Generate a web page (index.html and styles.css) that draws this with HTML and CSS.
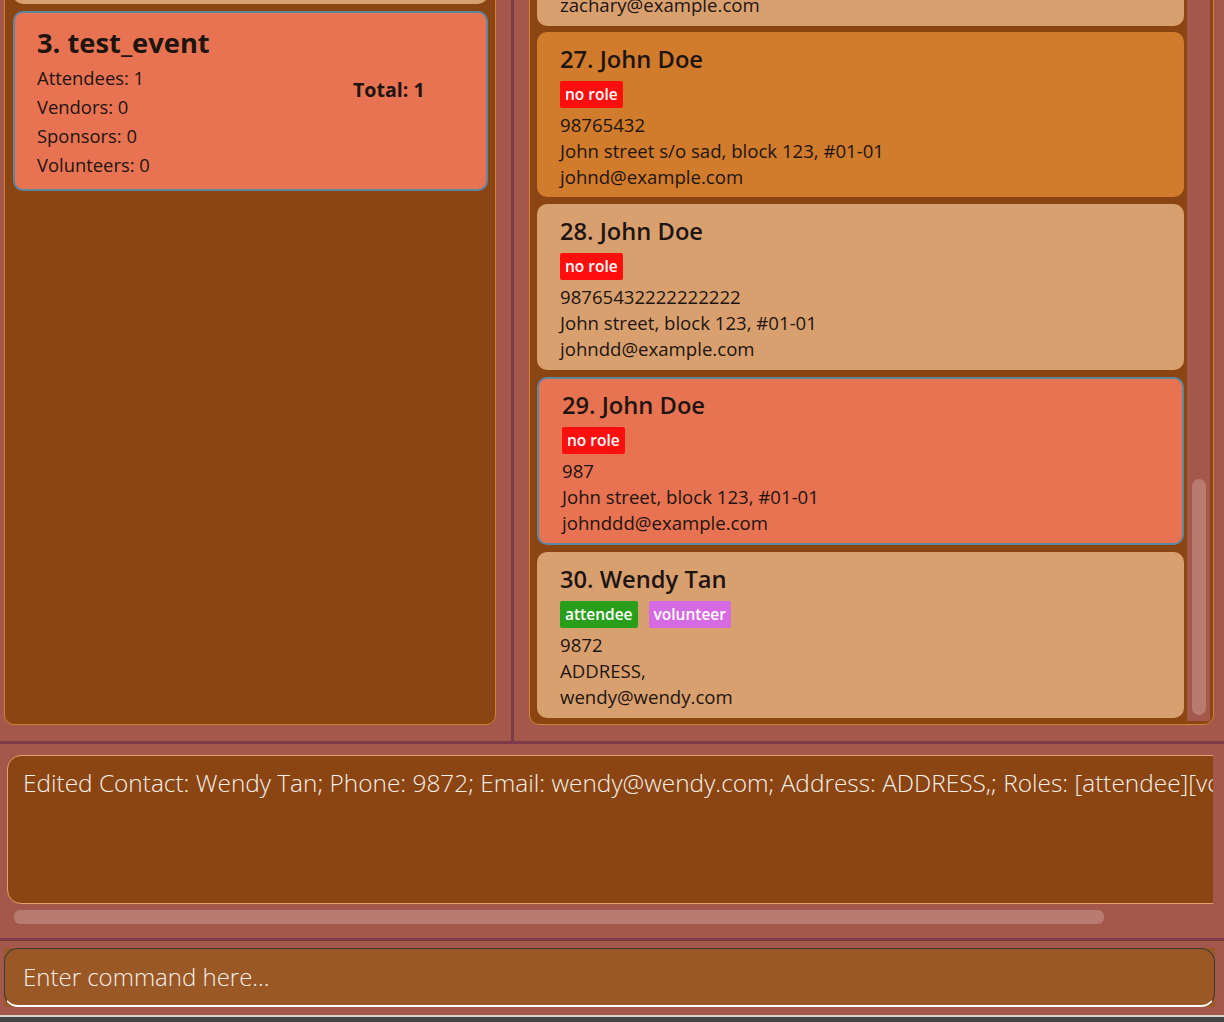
FILE: index.html
```html
<!DOCTYPE html>
<html lang="en">
<head>
<meta charset="utf-8">
<title>Contacts</title>
<link rel="stylesheet" href="styles.css">
</head>
<body>
<div class="app">
  <div class="lists">
    <div class="left-pane">
      <div class="panel event-panel">
        <div class="event-list">
          <div class="event-card partial"></div>
          <div class="event-card selected">
            <div class="event-title">3. test_event</div>
            <div class="event-counts">
              <div>Attendees: 1</div>
              <div>Vendors: 0</div>
              <div>Sponsors: 0</div>
              <div>Volunteers: 0</div>
            </div>
            <div class="event-total">Total: 1</div>
          </div>
        </div>
      </div>
    </div>
    <div class="divider"></div>
    <div class="right-pane">
      <div class="panel person-panel">
        <div class="person-list">
          <div class="person-card beige tail">
            <div class="line">zachary@example.com</div>
          </div>
          <div class="person-card orange first">
            <div class="name">27. John Doe</div>
            <div class="roles"><span class="role none">no role</span></div>
            <div class="line">98765432</div>
            <div class="line">John street s/o sad, block 123, #01-01</div>
            <div class="line">johnd@example.com</div>
          </div>
          <div class="person-card beige">
            <div class="name">28. John Doe</div>
            <div class="roles"><span class="role none">no role</span></div>
            <div class="line">98765432222222222</div>
            <div class="line">John street, block 123, #01-01</div>
            <div class="line">johndd@example.com</div>
          </div>
          <div class="person-card selected">
            <div class="name">29. John Doe</div>
            <div class="roles"><span class="role none">no role</span></div>
            <div class="line">987</div>
            <div class="line">John street, block 123, #01-01</div>
            <div class="line">johnddd@example.com</div>
          </div>
          <div class="person-card beige">
            <div class="name">30. Wendy Tan</div>
            <div class="roles"><span class="role attendee">attendee</span><span class="role volunteer">volunteer</span></div>
            <div class="line">9872</div>
            <div class="line">ADDRESS,</div>
            <div class="line">wendy@wendy.com</div>
          </div>
        </div>
        <div class="vscroll"><div class="vthumb"></div></div>
      </div>
    </div>
  </div>
  <div class="hline"></div>
  <div class="result-section">
    <div class="result-clip">
      <div class="result-box">Edited Contact: Wendy Tan; Phone: 9872; Email: wendy@wendy.com; Address: ADDRESS,; Roles: [attendee][volunteer]</div>
    </div>
    <div class="hscroll"><div class="hthumb"></div></div>
  </div>
  <div class="hline"></div>
  <div class="command-section">
    <div class="command-field">
      <div class="command-input">Enter command here...</div>
    </div>
  </div>
  <div class="window-bottom"></div>
</div>
</body>
</html>
```

FILE: styles.css
```css
* { box-sizing: border-box; }

html, body {
  margin: 0;
  padding: 0;
  width: 1224px;
  height: 1022px;
  overflow: hidden;
  background: #a4574b;
  font-family: "Open Sans", "Noto Sans", sans-serif;
  color: #1e1410;
}

.app {
  display: flex;
  flex-direction: column;
  width: 1224px;
  height: 1022px;
}

/* ---------- top lists ---------- */
.lists {
  display: flex;
  height: 741px;
  overflow: hidden;
  align-items: flex-end;
}

.panel {
  background: #8b4513;
  border: 1px solid #d2832f;
  border-radius: 10px;
  height: 760px;
  overflow: hidden;
  flex-shrink: 0;
}

.left-pane {
  width: 511px;
  flex-shrink: 0;
  padding: 0 15px 16px 4px;
  align-self: stretch;
  display: flex;
  align-items: flex-end;
}

.event-panel { width: 492px; }

.event-list {
  display: flex;
  flex-direction: column;
  gap: 7px;
  padding: 6px 7px 0 8px;
}

.event-card {
  border-radius: 10px;
  flex-shrink: 0;
}

.event-card.partial {
  height: 32px;
  background: #d9a06f;
}

.event-card.selected {
  height: 180px;
  background: #e87352;
  border: 2px solid #5d86a0;
  padding: 13px 10px 10px 22px;
  display: grid;
  grid-template-columns: 316px 1fr;
  grid-template-rows: auto 1fr;
}

.event-title {
  grid-column: 1 / 3;
  font-size: 27.3px;
  font-weight: 700;
  line-height: 34px;
}

.event-counts {
  margin-top: 3px;
  font-size: 18.4px;
  line-height: 29px;
}

.event-total {
  margin-top: 18px;
  font-size: 19.6px;
  font-weight: 700;
  line-height: 24px;
}

.divider {
  width: 3px;
  flex-shrink: 0;
  align-self: stretch;
  background: #7d3a48;
}

.right-pane {
  flex: 1;
  padding: 0 10px 16px 15px;
  align-self: stretch;
  display: flex;
  align-items: flex-end;
}

.person-panel {
  width: 685px;
  display: flex;
}

.person-list {
  flex: 1;
  display: flex;
  flex-direction: column;
  justify-content: flex-end;
  gap: 7px;
  padding: 0 3px 6px 7px;
  overflow: hidden;
}

.person-card {
  flex-shrink: 0;
  height: 166px;
  border-radius: 10px;
  padding: 12px 10px 8px 23px;
}

.person-card.first { height: 165px; }

.person-card.beige { background: #d9a06f; }
.person-card.orange { background: #d17b2c; }
.person-card.selected {
  height: 168px;
  background: #e87352;
  border: 2px solid #5d86a0;
  padding: 11px 10px 8px 23px;
}

.person-card.tail {
  display: flex;
  flex-direction: column;
  justify-content: flex-end;
  margin-bottom: -1px;
}

.name {
  font-size: 23.7px;
  font-weight: 600;
  line-height: 30px;
}

.roles {
  display: flex;
  gap: 11px;
  margin-top: 7px;
  margin-bottom: 4px;
}

.role {
  height: 27px;
  padding: 0 5px;
  border-radius: 2px;
  color: #ffffff;
  font-size: 15.5px;
  font-weight: 600;
  line-height: 27px;
}

.role.none { background: #ff0e0e; }
.role.attendee { background: #299e1a; }
.role.volunteer { background: #d56ae2; }

.line {
  font-size: 18.6px;
  line-height: 26px;
}

.vscroll {
  width: 23px;
  margin-right: 3px;
  margin-bottom: 3px;
  background: #a4574b;
  display: flex;
  flex-direction: column;
  justify-content: flex-end;
  padding: 0 4px 6px 5px;
}

.vthumb {
  height: 236px;
  border-radius: 7px;
  background: #b97a70;
}

/* ---------- separators ---------- */
.hline {
  height: 3px;
  background: #7d3a48;
  flex-shrink: 0;
}

/* ---------- result ---------- */
.result-section {
  height: 194px;
  padding: 11px 11px 0 7px;
  flex-shrink: 0;
}

.result-clip {
  width: 1206px;
  overflow: hidden;
}

.result-box {
  width: 1260px;
  height: 149px;
  background: #8b4513;
  border: 1px solid #e3a272;
  border-radius: 14px;
  padding: 10px 0 0 15px;
  color: #f6f0e6;
  font-size: 24.4px;
  font-weight: 300;
  line-height: 34px;
  white-space: nowrap;
}

.hscroll {
  margin: 6px 0 0 7px;
  width: 1090px;
}

.hthumb {
  height: 14px;
  border-radius: 6px;
  background: #b97a70;
}

/* ---------- command ---------- */
.command-section {
  height: 74px;
  padding: 7px 10px 0 4px;
  flex-shrink: 0;
}

.command-field {
  background: #9a5826;
  width: 1211px;
}

.command-input {
  height: 59px;
  border: 1px solid #3e3a38;
  border-bottom: 2px solid #ffffff;
  border-radius: 14px;
  padding: 0 0 0 18px;
  color: #f6f0e6;
  font-size: 24px;
  font-weight: 300;
  line-height: 56px;
}

.window-bottom {
  flex: 1;
  border-top: 2px solid #d8d4d0;
  background: #464646;
}
```
